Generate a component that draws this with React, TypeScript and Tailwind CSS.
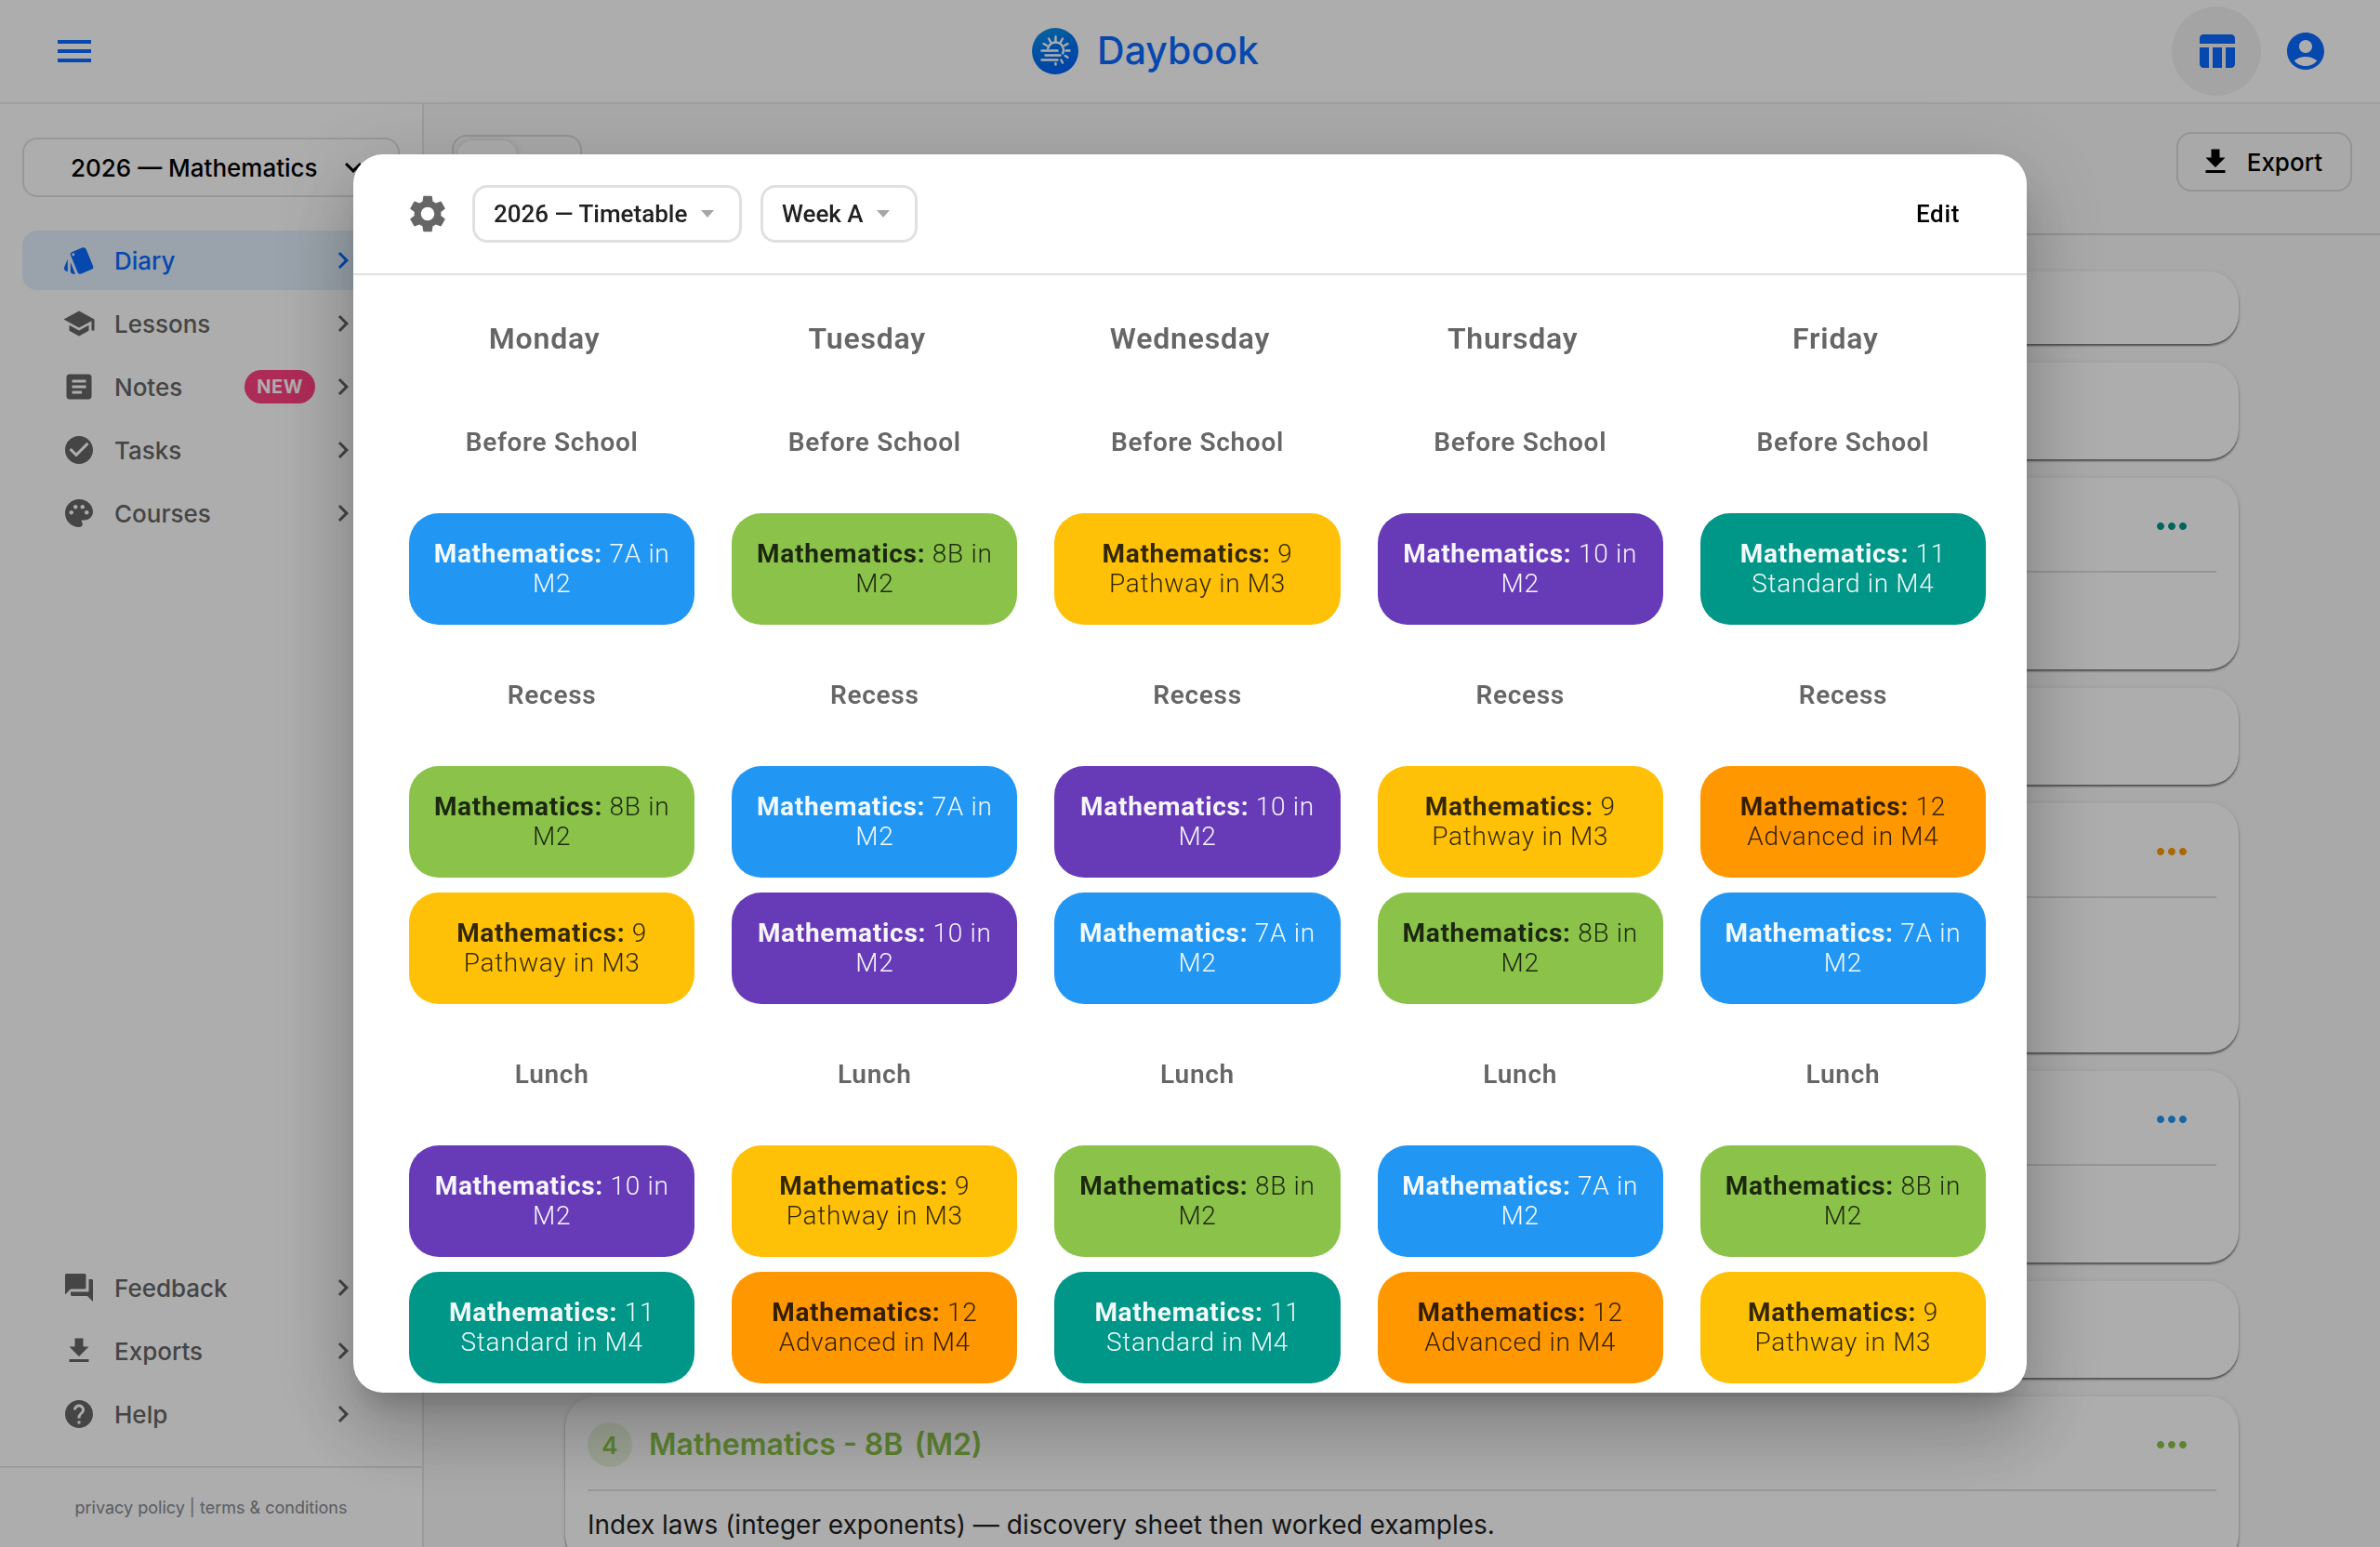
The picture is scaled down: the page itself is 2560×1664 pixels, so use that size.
import React from 'react';
import {
  MdAccountCircle,
  MdArticle,
  MdCheckCircle,
  MdChevronRight,
  MdExpandMore,
  MdFileDownload,
  MdForum,
  MdHelp,
  MdMenu,
  MdMoreHoriz,
  MdPalette,
  MdSchool,
  MdSettings,
  MdStyle,
  MdTableChart,
} from 'react-icons/md';
import type { IconType } from 'react-icons';

interface NavEntry {
  label: string;
  icon: IconType;
  active?: boolean;
  badge?: string;
}

const mainNav: NavEntry[] = [
  { label: 'Diary', icon: MdStyle, active: true },
  { label: 'Lessons', icon: MdSchool },
  { label: 'Notes', icon: MdArticle, badge: 'NEW' },
  { label: 'Tasks', icon: MdCheckCircle },
  { label: 'Courses', icon: MdPalette },
];

const footerNav: NavEntry[] = [
  { label: 'Feedback', icon: MdForum },
  { label: 'Exports', icon: MdFileDownload },
  { label: 'Help', icon: MdHelp },
];

const courses = {
  '7A': { text: '7A in M2', style: 'bg-[#2196f3] text-white/95' },
  '8B': { text: '8B in M2', style: 'bg-[#8bc34a] text-black/80' },
  '9': { text: '9 Pathway in M3', style: 'bg-[#ffc107] text-black/80' },
  '10': { text: '10 in M2', style: 'bg-[#673ab7] text-white/95' },
  '11': { text: '11 Standard in M4', style: 'bg-[#009688] text-white/95' },
  '12': { text: '12 Advanced in M4', style: 'bg-[#ff9800] text-black/80' },
};

type CourseKey = keyof typeof courses;

const days = ['Monday', 'Tuesday', 'Wednesday', 'Thursday', 'Friday'];

// A string is a break that spans every day, an array is one lesson per day
const periods: (string | CourseKey[])[] = [
  'Before School',
  ['7A', '8B', '9', '10', '11'],
  'Recess',
  ['8B', '7A', '10', '9', '12'],
  ['9', '10', '7A', '8B', '7A'],
  'Lunch',
  ['10', '9', '8B', '7A', '8B'],
  ['11', '12', '11', '12', '9'],
];

function Logo() {
  return (
    <svg viewBox="0 0 50 50" className="size-[50px]" aria-hidden="true">
      <defs>
        <linearGradient id="logo-fill" x1="0.2" y1="0" x2="0.6" y2="1">
          <stop offset="0" stopColor="#0a94e8" />
          <stop offset="0.5" stopColor="#0074f0" />
          <stop offset="1" stopColor="#0062fa" />
        </linearGradient>
      </defs>
      <circle cx="25" cy="25" r="25" fill="url(#logo-fill)" />
      <g stroke="#fff" strokeWidth="2.400" strokeLinecap="round" fill="none">
        <path d="M17.200 22a8.500 8.500 0 1 1 16 5.500" />
        <path d="M10.500 24.500h17M14.500 29.500h16M10.500 34.500h17" />
        <path d="M25.500 9.500v4.500M18 11.500l2 3.500M33 11.500l-2 3.500M12.500 17l3.500 2M38.500 17l-3.500 2M36.500 24.500h4M35.800 30l2.700 1.700M31.300 34.500l1.700 3M25.500 38v1.500" />
      </g>
    </svg>
  );
}

function NavItem({ label, icon: Icon, active, badge }: NavEntry) {
  return (
    <a
      href="#"
      className={`flex h-16 items-center rounded-2xl pl-[43px] pr-[43px] text-[26px] font-medium ${
        active ? 'bg-[#e3f0fc] text-[#0a6aff]' : 'text-[#666]'
      }`}
    >
      <Icon className="size-9" />
      <span className="ml-5 flex-1">{label}</span>
      {badge && (
        <span className="mr-3 flex h-9 items-center rounded-full bg-[#ff4081] px-[13px] text-xl font-bold tracking-wide text-white">
          {badge}
        </span>
      )}
      <MdChevronRight className="size-9" />
    </a>
  );
}

interface DiaryCardProps {
  className: string;
  accent?: string;
}

function DiaryCard({ className, accent }: DiaryCardProps) {
  return (
    <article className={`rounded-[32px] bg-white px-6 shadow-[0_2px_2px_rgba(0,0,0,0.5),0_0_6px_rgba(0,0,0,0.08)] ${className}`}>
      {accent && (
        <div className="flex h-[102px] items-center border-b-2 border-[#dedede] pt-1">
          <button type="button" aria-label="More" className={`ml-auto mr-6 ${accent}`}>
            <MdMoreHoriz className="size-12" />
          </button>
        </div>
      )}
    </article>
  );
}

function PickerSelect({ label, value }: { label: string; value: string }) {
  return (
    <label className="relative flex items-center">
      <span className="sr-only">{label}</span>
      <select className="h-[62px] appearance-none rounded-2xl border-[3px] border-[#e0e0e0] bg-white pl-5 pr-[55px] text-[26px] font-medium text-[#212121]">
        <option>{value}</option>
      </select>
      <svg viewBox="0 0 14 8" className="pointer-events-none absolute right-[30px] h-2 w-3.5 fill-[#a6a6a6]" aria-hidden="true">
        <path d="M0 0h14L7 8z" />
      </svg>
    </label>
  );
}

function TimetableDialog() {
  return (
    <div
      role="dialog"
      aria-modal="true"
      aria-label="Timetable"
      className="flex h-[80vh] w-[1800px] max-w-[80vw] flex-col overflow-hidden rounded-[32px] bg-white font-[Roboto,sans-serif] shadow-[0_22px_30px_-14px_rgba(0,0,0,0.2),0_48px_76px_6px_rgba(0,0,0,0.14),0_18px_92px_16px_rgba(0,0,0,0.12)]"
    >
      <header className="flex h-[130px] shrink-0 items-center border-b-2 border-[#e0e0e0] pl-14 pr-[72px]">
        <button type="button" aria-label="Settings" className="mr-6 text-[#666]">
          <MdSettings className="size-12" />
        </button>
        <div className="flex gap-5">
          <PickerSelect label="Timetable" value="2026 — Timetable" />
          <PickerSelect label="Week" value="Week A" />
        </div>
        <button type="button" className="ml-auto text-[26px] font-medium tracking-wide text-black">
          Edit
        </button>
      </header>

      <div className="overflow-hidden pt-4">
        <div className="grid h-[104px] grid-cols-5 items-center gap-10 px-[52px]">
          {days.map((day) => (
            <h2 key={day} className="text-center text-[32px] font-semibold tracking-wide text-[#666]">
              {day}
            </h2>
          ))}
        </div>

        <div className="grid auto-rows-[120px] grid-cols-5 gap-x-10 gap-y-4 pl-[60px] pr-11">
          {periods.map((period, row) =>
            days.map((day, col) => {
              if (typeof period === 'string') {
                return (
                  <p key={`${row}-${day}`} className="flex items-center justify-center text-[28px] font-semibold tracking-wide text-[#666]">
                    {period}
                  </p>
                );
              }
              const course = courses[period[col]];
              return (
                <button
                  key={`${row}-${day}`}
                  type="button"
                  className={`rounded-[32px] px-5 text-center text-[28px] leading-8 font-light tracking-wide ${course.style}`}
                >
                  <b className="font-bold">Mathematics:</b> {course.text}
                </button>
              );
            })
          )}
        </div>
      </div>
    </div>
  );
}

export default function App() {
  return (
    <div className="flex h-screen flex-col overflow-hidden bg-[#fafafa] font-[Inter,sans-serif]">
      <header className="flex h-28 shrink-0 items-center justify-between border-b-2 border-[#eaeaea] bg-white pl-8 pr-14 text-[#0a6aff]">
        <button type="button" aria-label="Menu" className="flex size-24 items-center justify-center">
          <MdMenu className="size-12" />
        </button>
        <a href="#" className="flex items-center gap-5 text-[41px] font-medium">
          <Logo />
          Daybook
        </a>
        <div className="flex items-center">
          <button type="button" aria-label="Timetable" className="flex size-24 items-center justify-center rounded-full bg-black/5">
            <MdTableChart className="size-12" />
          </button>
          <button type="button" aria-label="Account" className="ml-6">
            <MdAccountCircle className="size-12" />
          </button>
        </div>
      </header>

      <div className="flex min-h-0 flex-1">
        <aside className="flex w-[456px] shrink-0 flex-col border-r-2 border-[#e6e6e6] bg-white">
          <div className="px-6 pt-9">
            <button
              type="button"
              className="flex h-16 w-full items-center justify-between rounded-2xl border-2 border-[#e0e0e0] pl-[50px] pr-[30px] text-[26px] font-medium text-black"
            >
              2026 — Mathematics
              <MdExpandMore className="size-9" />
            </button>
          </div>
          <nav className="mt-9 flex flex-1 flex-col gap-1 px-6">
            {mainNav.map((entry) => (
              <NavItem key={entry.label} {...entry} />
            ))}
          </nav>
          <nav className="flex flex-col gap-1 px-6 pb-6">
            {footerNav.map((entry) => (
              <NavItem key={entry.label} {...entry} />
            ))}
          </nav>
          <footer className="flex h-[87px] items-center justify-center border-t-2 border-[#e6e6e6] text-lg text-[#85888f]">
            <p>
              <a href="#">privacy policy</a> | <a href="#">terms &amp; conditions</a>
            </p>
          </footer>
        </aside>

        <main className="flex-1 overflow-hidden">
          <div className="flex h-[141px] items-center justify-between border-b-2 border-[#dadada] px-[30px] pb-[15px]">
            <div className="flex h-[58px] w-[140px] rounded-2xl border-2 border-[#dadada] p-1">
              <button type="button" aria-label="Day view" className="w-16 rounded-2xl bg-white shadow-[0_0_6px_rgba(0,0,0,0.15)]" />
              <button type="button" aria-label="Week view" className="flex-1" />
            </div>
            <button
              type="button"
              className="flex h-16 items-center gap-4 rounded-2xl border-2 border-[#dadada] pl-[22px] pr-[30px] text-[26px] font-medium text-black"
            >
              <MdFileDownload className="size-9" />
              Export
            </button>
          </div>

          <div className="mx-auto flex max-w-[1800px] flex-col gap-5 pt-[39px]">
            <DiaryCard className="min-h-[78px]" />
            <DiaryCard className="min-h-[104px]" />
            <DiaryCard className="min-h-[206px]" accent="text-[#009688]" />
            <DiaryCard className="min-h-[104px]" />
            <DiaryCard className="min-h-[268px]" accent="text-[#ff9800]" />
            <DiaryCard className="min-h-[206px]" accent="text-[#2196f3]" />
            <DiaryCard className="min-h-[104px]" />
            <article className="rounded-[32px] bg-white px-6 pb-6 shadow-[0_2px_2px_rgba(0,0,0,0.5),0_0_6px_rgba(0,0,0,0.08)]">
              <div className="flex h-[102px] items-center border-b-2 border-[#dedede] pt-1 text-[32px] font-semibold text-[#8bc34a]">
                <span className="mr-[18px] flex size-12 items-center justify-center rounded-full bg-[#8bc34a]/20 text-[26px]">4</span>
                <h3>Mathematics - 8B</h3>
                <span className="ml-3">(M2)</span>
                <button type="button" aria-label="More" className="ml-auto mr-6">
                  <MdMoreHoriz className="size-12" />
                </button>
              </div>
              <p className="pt-4 text-[28px] leading-10 text-[#1f1f1f]">
                Index laws (integer exponents) — discovery sheet then worked examples.
              </p>
            </article>
          </div>
        </main>
      </div>

      <div className="fixed inset-0 z-50 flex items-center justify-center bg-black/32">
        <TimetableDialog />
      </div>
    </div>
  );
}
